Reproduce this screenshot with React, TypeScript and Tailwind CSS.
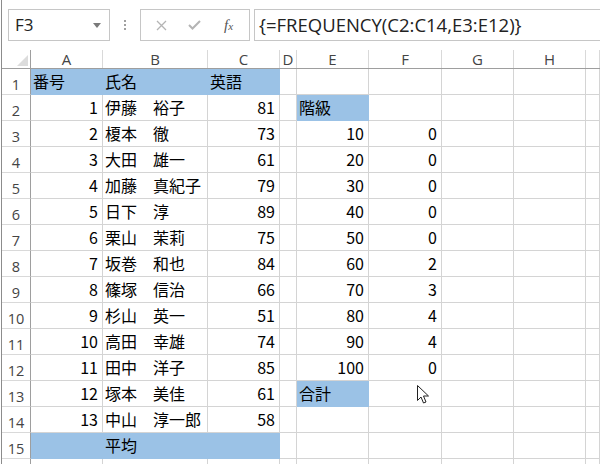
import React from "react";

const cols = ["A", "B", "C", "D", "E", "F", "G", "H", ""];
const gridCols = "grid grid-cols-[29px_72px_105px_72px_17px_72px_73px_72px_72px_1fr]";

type Cell = { t?: string; r?: boolean; fill?: boolean };

const names: [string, number][] = [
  ["伊藤　裕子", 81],
  ["榎本　徹", 73],
  ["大田　雄一", 61],
  ["加藤　真紀子", 79],
  ["日下　淳", 89],
  ["栗山　茉莉", 75],
  ["坂巻　和也", 84],
  ["篠塚　信治", 66],
  ["杉山　英一", 51],
  ["高田　幸雄", 74],
  ["田中　洋子", 85],
  ["塚本　美佳", 61],
  ["中山　淳一郎", 58],
];
const freq = [0, 0, 0, 0, 0, 2, 3, 4, 4, 0];

function buildRows(): Cell[][] {
  const rows: Cell[][] = [];
  for (let i = 1; i <= 16; i++) {
    const row: Cell[] = Array.from({ length: 9 }, () => ({}));
    if (i === 1) {
      row[0] = { t: "番号", fill: true };
      row[1] = { t: "氏名", fill: true };
      row[2] = { t: "英語", fill: true };
    } else if (i >= 2 && i <= 14) {
      const [n, s] = names[i - 2];
      row[0] = { t: String(i - 1), r: true };
      row[1] = { t: n };
      row[2] = { t: String(s), r: true };
    } else if (i === 15) {
      row[0] = { fill: true };
      row[1] = { t: "平均", fill: true };
      row[2] = { fill: true };
    }
    if (i === 2) row[4] = { t: "階級", fill: true };
    if (i >= 3 && i <= 12) {
      row[4] = { t: String((i - 2) * 10), r: true };
      row[5] = { t: String(freq[i - 3]), r: true };
    }
    if (i === 13) row[4] = { t: "合計", fill: true };
    rows.push(row);
  }
  return rows;
}

export default function App() {
  const rows = buildRows();
  return (
    <div className="relative w-[600px] h-[464px] overflow-hidden bg-white pl-px">
      <div className="h-full border-l border-[#8c8c8c]">
        {/* formula bar area */}
        <div className="h-[50px] flex items-start pt-[9px]">
          <div className="ml-[6px] w-[102px] h-[32px] border border-[#c6c6c6] flex items-center justify-between pl-[6px] pr-[8px] font-['Open_Sans',sans-serif] text-[17px] text-[#222]">
            <span>F3</span>
            <svg width="8" height="5" viewBox="0 0 8 5"><path d="M0 0h8L4 5z" fill="#7a7a7a" /></svg>
          </div>
          <div className="ml-[13px] h-[32px] flex flex-col items-center justify-center gap-[2px] w-[4px]">
            <div className="w-[2px] h-[2px] bg-[#a0a0a0]" />
            <div className="w-[2px] h-[2px] bg-[#a0a0a0]" />
            <div className="w-[2px] h-[2px] bg-[#a0a0a0]" />
          </div>
          <div className="ml-[13px] w-[110px] h-[32px] border border-[#c6c6c6] flex items-center">
            <svg className="ml-[15px]" width="11" height="11" viewBox="0 0 11 11">
              <path d="M1 1L10 10M10 1L1 10" stroke="#b4b4b4" strokeWidth="1.3" />
            </svg>
            <svg className="ml-[21px]" width="13" height="10" viewBox="0 0 13 10">
              <path d="M1 5L4.5 8.5L12 1" stroke="#b4b4b4" strokeWidth="2" fill="none" />
            </svg>
            <span className="ml-[23px] font-['Liberation_Serif',serif] italic text-[#555] text-[15px] leading-none">
              f<span className="text-[11px]">x</span>
            </span>
          </div>
          <div className="ml-[4px] flex-1 h-[32px] border-l border-t border-b border-[#c6c6c6] flex items-center pl-[4px] font-['Open_Sans',sans-serif] text-[18.5px] text-[#222]">
            {"{=FREQUENCY(C2:C14,E3:E12)}"}
          </div>
        </div>

        {/* column headers */}
        <div className={`${gridCols} h-[19px] border-b border-[#9e9e9e] font-['Open_Sans',sans-serif] text-[15px] text-[#444]`}>
          <div className="border-r border-[#9e9e9e] flex items-end justify-end pr-[2px] pb-[2px]">
            <svg width="11" height="11" viewBox="0 0 11 11"><path d="M11 0V11H0z" fill="#dcdcdc" /></svg>
          </div>
          {cols.map((c, i) => (
            <div key={i} className="border-r border-[#d9d9d9] flex items-end justify-center leading-[18px]">
              {c}
            </div>
          ))}
        </div>

        {/* rows */}
        {rows.map((row, ri) => (
          <div key={ri} className={`${gridCols} h-[26px]`}>
            <div className="border-r border-b border-r-[#9e9e9e] border-b-[#d9d9d9] flex items-end justify-center pb-[1px] font-['Open_Sans',sans-serif] text-[14.5px] leading-[17px] text-[#444]">
              {ri < 15 ? ri + 1 : ""}
            </div>
            {row.map((c, ci) => (
              <div
                key={ci}
                className={`border-r border-b flex items-end pb-[3px] font-['Noto_Sans_CJK_JP',sans-serif] text-[16px] leading-[20px] text-black whitespace-nowrap ${
                  c.fill ? "bg-[#9bc2e6] border-[#9bc2e6]" : "border-[#d4d4d4]"
                } ${c.r ? "justify-end pr-[4px]" : "pl-[2px]"}`}
              >
                {c.t}
              </div>
            ))}
          </div>
        ))}
      </div>

      {/* mouse cursor */}
      <svg className="absolute left-[417px] top-[385px]" width="13" height="20" viewBox="0 0 13 20">
        <path d="M0.5 0.5V15.5L4 12L6.5 18L9 17L6.5 11H11.5Z" fill="white" stroke="#222" strokeWidth="1" strokeLinejoin="round" />
      </svg>
    </div>
  );
}
